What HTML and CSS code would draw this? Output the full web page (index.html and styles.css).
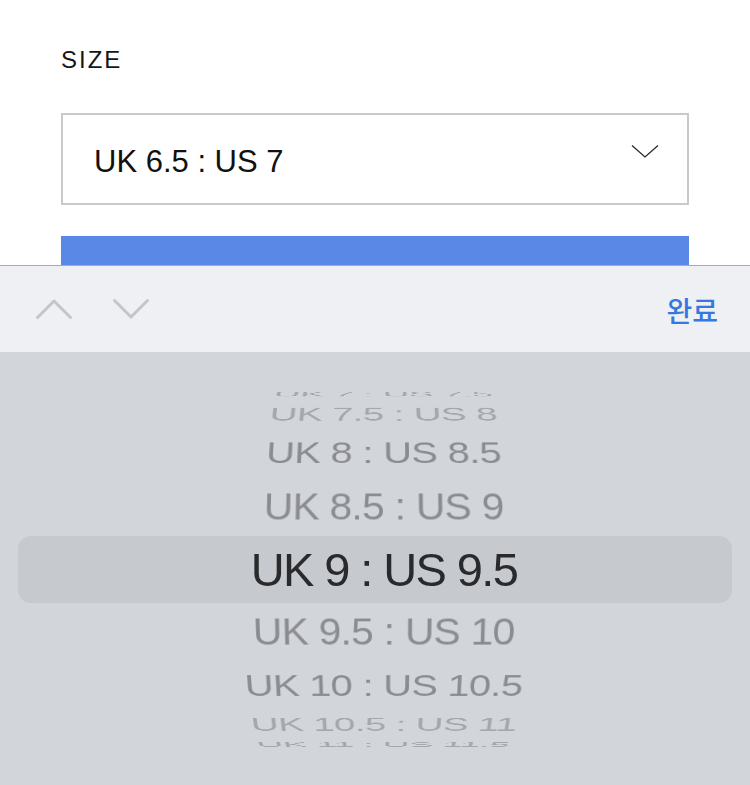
FILE: index.html
```html
<!DOCTYPE html>
<html lang="ko">
<head>
  <meta charset="UTF-8" />
  <meta name="viewport" content="width=device-width, initial-scale=1.0" />
  <title>Size</title>
  <link rel="stylesheet" href="styles.css">
</head>
<body>
  <div class="page">
    <div class="field-label">SIZE</div>
    <div class="select">
      <span class="select-value">UK 6.5 : US 7</span>
      <svg class="select-caret" width="30" height="14" viewBox="0 0 30 14">
        <path d="M2 1.5 L15 13 L28 1.5" fill="none" stroke="#2a2a2a" stroke-width="1.3" />
      </svg>
    </div>
    <div class="add-btn"></div>
  </div>

  <div class="accessory">
    <div class="nav-arrows">
      <svg width="38" height="22" viewBox="0 0 38 22">
        <path d="M2.5 19.5 L19 3 L35.5 19.5" fill="none" stroke="#c4c5c9" stroke-width="3" stroke-linecap="round" stroke-linejoin="round" />
      </svg>
      <svg width="38" height="22" viewBox="0 0 38 22">
        <path d="M2.5 2.5 L19 19 L35.5 2.5" fill="none" stroke="#c4c5c9" stroke-width="3" stroke-linecap="round" stroke-linejoin="round" />
      </svg>
    </div>
    <button class="done">완료</button>
  </div>

  <div class="picker">
    <div class="wheel">
      <div class="band"></div>
      <div class="drum">
        <div class="row far p-m4">UK 7 : US 7.5</div>
        <div class="row far p-m3">UK 7.5 : US 8</div>
        <div class="row p-m2">UK 8 : US 8.5</div>
        <div class="row p-m1">UK 8.5 : US 9</div>
        <div class="row current">UK 9 : US 9.5</div>
        <div class="row p-1">UK 9.5 : US 10</div>
        <div class="row p-2">UK 10 : US 10.5</div>
        <div class="row far p-3">UK 10.5 : US 11</div>
        <div class="row far p-4">UK 11 : US 11.5</div>
      </div>
    </div>
  </div>
</body>
</html>
```

FILE: styles.css
```css
body {
  margin: 0;
  font-family: "Liberation Sans", Arial, "Noto Sans CJK KR", sans-serif;
  background: #fff;
  color: #111;
}

/* page content behind the keyboard */
.page {
  height: 265px;
  overflow: hidden;
  padding: 46px 61px 0;
  box-sizing: border-box;
}
.field-label {
  font-size: 24px;
  line-height: 28px;
  letter-spacing: 2px;
  color: #161616;
}
.select {
  margin-top: 39px;
  height: 92px;
  border: 2px solid #c9c9c9;
  box-sizing: border-box;
  display: flex;
  align-items: center;
  justify-content: space-between;
  padding: 4px 27px 0 31px;
}
.select-value {
  font-size: 31px;
  line-height: 1;
  color: #111;
}
.select-caret {
  margin-bottom: 21px;
}
.add-btn {
  margin-top: 31px;
  height: 40px;
  background: #5a88e6;
}

/* input accessory bar */
.accessory {
  height: 87px;
  box-sizing: border-box;
  border-top: 1px solid #a9aaae;
  background: #eff0f4;
  display: flex;
  align-items: center;
  justify-content: space-between;
  padding: 0 32px 0 35px;
}
.nav-arrows {
  display: flex;
  gap: 39px;
}
.nav-arrows svg {
  display: block;
}
.done {
  border: 0;
  background: none;
  padding: 0;
  font-family: "Noto Sans CJK KR", sans-serif;
  font-size: 28px;
  font-weight: 500;
  color: #3579e0;
  line-height: 1;
  margin-top: 2px;
}

/* picker wheel */
.picker {
  height: 433px;
  background: #d2d5da;
  padding-top: 38px;
  box-sizing: border-box;
}
.wheel {
  height: 358px;
  overflow: hidden;
  display: grid;
  padding-left: 18px;
  perspective: 1316px;
  perspective-origin: 50% 50%;
}
.band {
  grid-area: 1 / 1;
  align-self: center;
  height: 67px;
  margin-right: 18px;
  border-radius: 13px;
  background: #c6c9ce;
}
.drum {
  grid-area: 1 / 1;
  align-self: center;
  justify-self: center;
  display: grid;
  justify-items: center;
  align-items: center;
  transform-style: preserve-3d;
  transform: translateZ(-204px);
}
.row {
  grid-area: 1 / 1;
  white-space: nowrap;
  font-size: 41px;
  line-height: 1;
  letter-spacing: -0.7px;
  color: #8b8c90;
  backface-visibility: hidden;
}
.row.far {
  color: #a5a7ab;
}
.row.current {
  font-size: 47px;
  letter-spacing: -1.6px;
  color: #2a2a2c;
  transform: translateZ(204px);
}
.p-m4 { transform: rotateX(72deg) translateZ(204px); color: #b5b7bb; }
.p-m3 { transform: rotateX(54deg) translateZ(204px); }
.p-m2 { transform: rotateX(36deg) translateZ(204px); }
.p-m1 { transform: rotateX(18deg) translateZ(204px); }
.p-1 { transform: rotateX(-18deg) translateZ(204px); }
.p-2 { transform: rotateX(-36deg) translateZ(204px); }
.p-3 { transform: rotateX(-54deg) translateZ(204px); }
.p-4 { transform: rotateX(-72deg) translateZ(204px); color: #b5b7bb; }
```
